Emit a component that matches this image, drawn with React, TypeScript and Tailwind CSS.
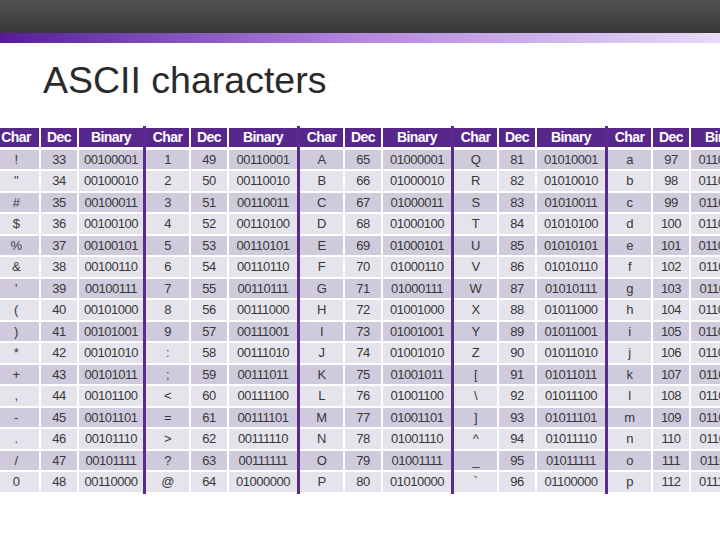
const groups = [
  { start: 33, w: ['w-[46px]', 'w-[36px]', 'w-[64px]'] },
  { start: 49, w: ['w-[43px]', 'w-[36px]', 'w-[68px]'] },
  { start: 65, w: ['w-[43px]', 'w-[36px]', 'w-[68px]'] },
  { start: 81, w: ['w-[43px]', 'w-[36px]', 'w-[68px]'] },
  { start: 97, w: ['w-[43px]', 'w-[36px]', 'w-[68px]'] },
]

const headers = ['Char', 'Dec', 'Binary']

function Group({ start, w }: { start: number; w: string[] }) {
  const rows = Array.from({ length: 16 }, (_, i) => start + i)
  return (
    <div className="flex flex-col shrink-0">
      <div className="flex gap-[2px] mb-[3px]">
        {headers.map((h, i) => (
          <div
            key={h}
            className={`${w[i]} h-[19px] bg-[#58278c] text-white font-bold text-[14px] tracking-[-0.6px] flex items-center justify-center`}
          >
            {h}
          </div>
        ))}
      </div>
      <div className="flex flex-col gap-[2px]">
        {rows.map((code, r) => {
          const bg = r % 2 === 0 ? 'bg-[#cfcbdc]' : 'bg-[#e5e3eb]'
          const cells = [String.fromCharCode(code), String(code), code.toString(2).padStart(8, '0')]
          return (
            <div key={code} className="flex gap-[2px]">
              {cells.map((c, i) => (
                <div
                  key={i}
                  className={`${w[i]} ${bg} h-[19.5px] text-[13px] tracking-[-0.5px] text-[#383838] flex items-center justify-center whitespace-pre`}
                >
                  {c}
                </div>
              ))}
            </div>
          )
        })}
      </div>
    </div>
  )
}

export default function App() {
  return (
    <div className="w-[720px] h-[540px] bg-white overflow-hidden font-['Liberation_Sans',Arial,sans-serif]">
      <div className="h-[33px] bg-linear-to-b from-[#525252] to-[#383838]" />
      <div className="h-[10px] bg-linear-to-r from-[#56189a] via-[#b487df] to-[#e6dbf4]" />
      <h1 className="mt-[19px] pl-[43px] text-[37.5px] leading-none text-[#2a2a2a] font-normal">
        ASCII characters
      </h1>
      <div className="mt-[28px] ml-[-7px] flex">
        {groups.map((g, i) => (
          <div key={g.start} className="flex shrink-0">
            <Group start={g.start} w={g.w} />
            {i < groups.length - 1 && <div className="w-[3px] bg-[#5a2a8f] -my-[2px] shrink-0" />}
          </div>
        ))}
      </div>
    </div>
  )
}
